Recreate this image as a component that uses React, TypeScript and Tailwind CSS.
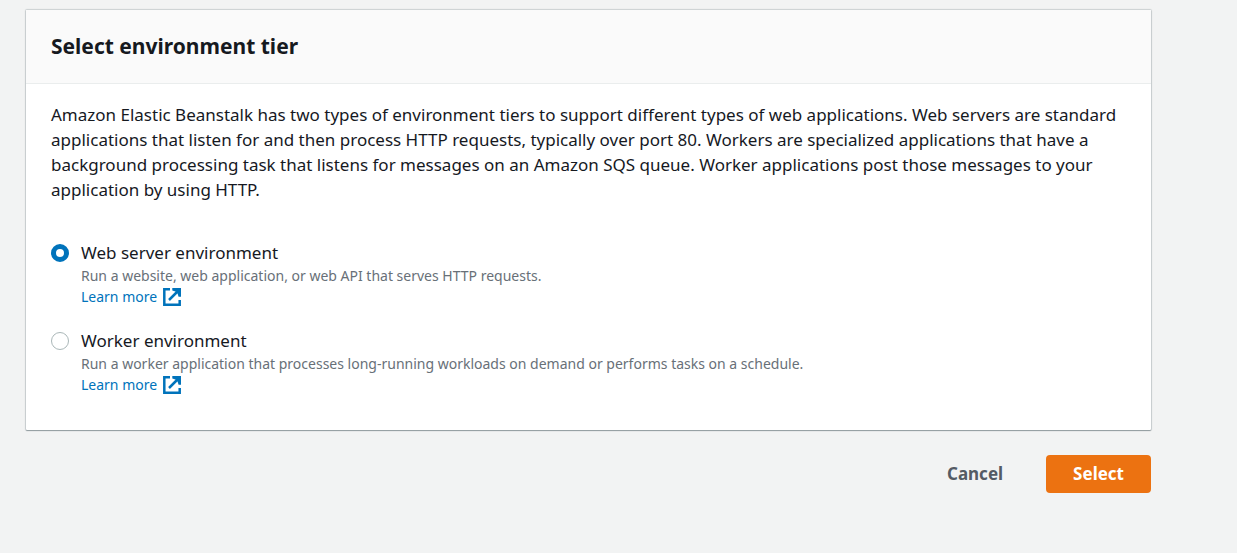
const ExternalIcon = () => (
  <svg viewBox="0 0 18 18" className="h-[18px] w-[18px]" fill="none" stroke="currentColor" strokeWidth="2.5" aria-hidden="true">
    <path d="M7 1.3H1.3v15.4h15.4V12" />
    <path d="M6 12L15 3" />
    <path d="M9.3 0H18v8.7h-2.4l-1.1-3.1-2.1-2.1-3.1-1.1z" fill="currentColor" stroke="none" />
  </svg>
);

const tiers = [
  { id: "web", title: "Web server environment", text: "Run a website, web application, or web API that serves HTTP requests." },
  { id: "worker", title: "Worker environment", text: "Run a worker application that processes long-running workloads on demand or performs tasks on a schedule." },
];

export default function App() {
  return (
    <div className="min-h-screen bg-[#f2f3f3] pt-2.5 pr-[86px] pl-[26px] font-['Noto_Sans','Open_Sans',sans-serif] text-[#16191f]">
      <form>
        <section className="rounded-[1px] bg-white shadow-[0_1px_1px_0_rgba(0,28,36,0.3),0_0_1px_1px_rgba(0,28,36,0.16)]">
          <header className="border-b border-[#eaeded] bg-[#fafafa] px-[25px] py-5">
            <h1 className="text-[21px] leading-[33px] font-bold">Select environment tier</h1>
          </header>
          <div className="px-[25px] pt-[18px] pb-[35px]">
            <p className="text-[17px] leading-[25px]">
              Amazon Elastic Beanstalk has two types of environment tiers to support different types of web applications. Web servers are standard applications that listen for and then process HTTP requests, typically over port 80. Workers are specialized applications that have a background processing task that listens for messages on an Amazon SQS queue. Worker applications post those messages to your application by using HTTP.
            </p>
            <div className="mt-[38px] flex flex-col gap-[21px]">
              {tiers.map((t, i) => (
                <div key={t.id} className="flex gap-3">
                  <input id={t.id} type="radio" name="tier" defaultChecked={i === 0} className="mt-1 h-[18px] w-[18px] shrink-0 appearance-none rounded-full border border-[#aab7b8] bg-white checked:border-[5px] checked:border-[#0073bb]" />
                  <div>
                    <label htmlFor={t.id} className="block text-[17px] leading-[25px]">{t.title}</label>
                    <p className="text-sm leading-[21px] text-[#687078]">{t.text}</p>
                    <a href="#" className="flex items-center gap-1.5 text-sm leading-[21px] text-[#0073bb]">Learn more <ExternalIcon /></a>
                  </div>
                </div>
              ))}
            </div>
          </div>
        </section>
        <div className="mt-[25px] flex justify-end gap-[18px]">
          <button type="button" className="h-[38px] px-[25px] text-[17px] font-bold text-[#545b64]">Cancel</button>
          <button type="button" className="h-[38px] rounded-sm bg-[#ec7211] px-[27px] text-[17px] font-bold text-white">Select</button>
        </div>
      </form>
    </div>
  );
}
